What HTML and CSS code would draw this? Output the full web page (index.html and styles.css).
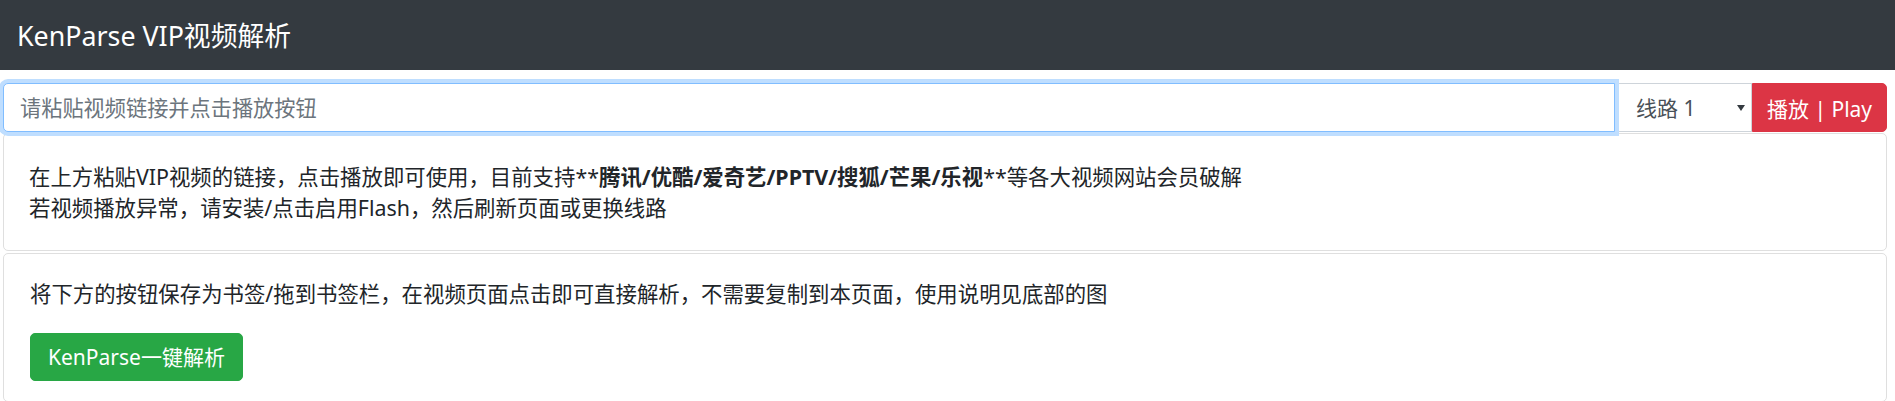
FILE: index.html
```html
<!DOCTYPE html>
<html>
<head>
    <meta charset="utf-8">
    <title>KenParse VIP视频解析</title>
    <link rel="stylesheet" href="styles.css">
</head>
<body>
    <nav class="navbar">
        <a class="brand" href="#">KenParse VIP视频解析</a>
    </nav>
    <div class="main">
        <div class="input-group">
            <input type="text" class="url-input" id="url" placeholder="请粘贴视频链接并点击播放按钮">
            <div class="select-wrap">
                <select id="linea" class="line-select">
                    <option value="1">线路 1</option>
                    <option value="2">线路 2</option>
                    <option value="3">线路 3</option>
                </select>
            </div>
            <button class="btn btn-play" onclick="play()">播放 | Play</button>
        </div>
        <div class="card card-info">
            <p>在上方粘贴VIP视频的链接，点击播放即可使用，目前支持**<b>腾讯/优酷/爱奇艺/PPTV/搜狐/芒果/乐视</b>**等各大视频网站会员破解</p>
            <p>若视频播放异常，请安装/点击启用Flash，然后刷新页面或更换线路</p>
        </div>
        <div class="card card-bookmark">
            <p>将下方的按钮保存为书签/拖到书签栏，在视频页面点击即可直接解析，不需要复制到本页面，使用说明见底部的图</p>
            <a class="btn btn-green" href="#">KenParse一键解析</a>
        </div>
    </div>
    <script>
        function play() {
            var url = document.getElementById('url').value;
            if (!url) return;
            console.log('linea', document.getElementById('linea').value, url);
        }
    </script>
</body>
</html>
```

FILE: styles.css
```css
/* general */
body {
    margin: 0;
    font-family: "Noto Sans", "Noto Sans CJK SC", sans-serif;
    font-size: 21.4px;
    line-height: 31px;
    color: #212529;
    background-color: #fff;
}
.navbar {
    height: 70px;
    background-color: #343a40;
    display: flex;
    align-items: center;
    padding: 0 17px;
}
.brand {
    color: #fff;
    font-size: 26.8px;
    text-decoration: none;
}
.main {
    padding: 13px 8px 0 3px;
}
.input-group {
    display: flex;
    height: 49px;
}
.url-input {
    flex: 1;
    position: relative;
    z-index: 1;
    margin: 0;
    padding: 0 16px;
    border: 1px solid #80bdff;
    border-radius: 5px 0 0 5px;
    box-shadow: 0 0 0 4px #bfdeff;
    outline: none;
    font-family: inherit;
    font-size: 21.2px;
    color: #495057;
    box-sizing: border-box;
}
.url-input::placeholder {
    color: #6c757d;
}
.select-wrap {
    position: relative;
    width: 137px;
}
.select-wrap::after {
    content: "";
    position: absolute;
    right: 7px;
    top: 22px;
    border-left: 4px solid transparent;
    border-right: 4px solid transparent;
    border-top: 6px solid #343a40;
}
.line-select {
    appearance: none;
    -webkit-appearance: none;
    width: 100%;
    height: 100%;
    margin: 0;
    padding: 0 20px 0 21px;
    border: 1px solid #ced4da;
    border-left: none;
    border-radius: 0;
    background-color: #fff;
    font-family: inherit;
    font-size: 21px;
    color: #495057;
    box-sizing: border-box;
}
.btn {
    display: inline-block;
    border: 1px solid transparent;
    color: #fff;
    font-family: inherit;
    font-size: 21px;
    text-decoration: none;
    box-sizing: border-box;
    cursor: pointer;
}
.btn-play {
    width: 135px;
    padding: 0;
    background-color: #dc3545;
    border-color: #dc3545;
    border-radius: 0 5px 5px 0;
}
.btn-play:hover {
    background-color: #c82333;
}
.card {
    border: 1px solid #dfdfdf;
    border-radius: 5px;
    background-color: #fff;
}
.card p {
    margin: 0;
}
.card-info {
    margin-top: 1px;
    padding: 27px 25px 27px;
}
.card-bookmark {
    margin-top: 2px;
    padding: 24px 26px 20px;
}
.card-bookmark p {
    margin-bottom: 24px;
}
.btn-green {
    height: 48px;
    line-height: 46px;
    padding: 0 17px;
    background-color: #28a745;
    border-color: #28a745;
    border-radius: 5px;
}
.btn-green:hover {
    background-color: #218838;
}
b {
    font-weight: bold;
}
```
